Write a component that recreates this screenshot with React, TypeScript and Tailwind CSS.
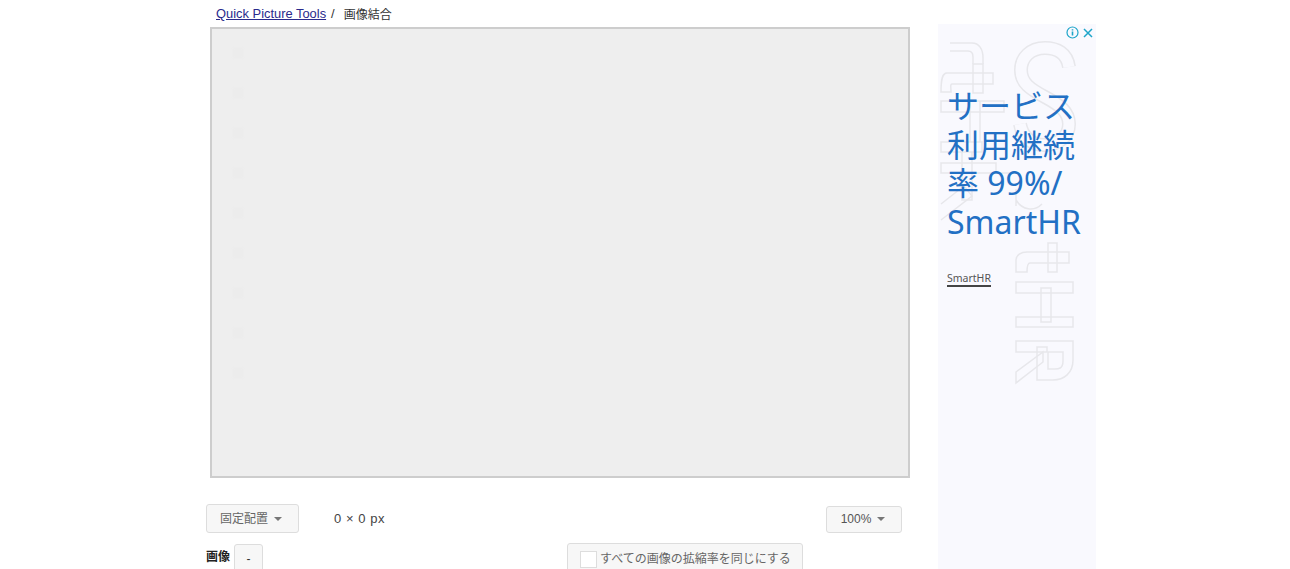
const jp = 'font-["Liberation_Sans","Noto_Sans_CJK_JP",sans-serif]';
const marks = [0, 1, 2, 3, 4, 5, 6, 7, 8];

function Caret() {
  return <span className="ml-[6px] inline-block h-0 w-0 border-x-[4.5px] border-t-[4px] border-x-transparent border-t-[#777]" />;
}

function AdArt() {
  return (
    <svg className="absolute left-0 top-0" width="158" height="545" viewBox="0 0 158 545" fill="none" stroke="#e7e7eb" strokeWidth="1.5">
      {/* S, a thick line with a thinner one on top gives the outline */}
      <path d="M131 43C129 29 119 24 107 24C92 24 83 34 83 46C83 59 92 65 107 73C122 81 131 88 131 100C131 113 120 121 106 121C93 121 84 112 82 100" strokeWidth="14" />
      <path d="M131 43C129 29 119 24 107 24C92 24 83 34 83 46C83 59 92 65 107 73C122 81 131 88 131 100C131 113 120 121 106 121C93 121 84 112 82 100" strokeWidth="11" stroke="#f9f9fe" />
      {/* left glyphs */}
      <path d="M12 19H34C41 19 45 25 45 34V40M12 27H30C33 27 35 29 35 33V40" />
      <path d="M35 40H45V69H35zM9 49H55V60H14C12 60 13 63 13 68H3C3 56 4 49 9 49z" />
      <path d="M3 77H66V88H3zM32 77H42V118H32zM3 118H44V128H3zM3 139H58V149H3zM24 128H34V176H24z" />
      <path d="M3 180L26 162L34 172L3 196M58 149H76M78 176C84 186 96 188 104 180M78 165V182" />
      {/* t */}
      <path d="M110 219H119V248H110z" />
      <path d="M131 228V239H92C90 239 89 241 89 248H78V236C78 231 83 228 89 228z" />
      {/* H */}
      <path d="M78 258H135V269H78zM78 293H135V303H78zM103 264H113V298H103z" />
      {/* R */}
      <path d="M78 317H135V336C135 349 126 356 115 356H99V323H109V328H78z" />
      <path d="M110 328H125V337C125 345 120 345 117 345H110z" />
      <path d="M78 348L105 328V338L78 359z" />
    </svg>
  );
}

export default function App() {
  return (
    <div className={`flex h-[569px] overflow-hidden bg-white pl-[206px] text-[#333] ${jp}`}>
      <div className="w-[704px] shrink-0">
        <div className="flex h-[27px] items-center pl-[10px] pt-[2px] text-[12.9px] leading-none">
          <a href="#" className="text-[#2a2a8c] underline">Quick Picture Tools</a>
          <span className="ml-[5px]">/</span>
          <span className="ml-[9px] text-[12px]">画像結合</span>
        </div>
        <div className="ml-[4px] flex h-[451px] w-[700px] flex-col gap-[30px] border-2 border-[#cdcdcd] bg-[#eeeeee] pl-[21px] pt-[19px]">
          {marks.map((m) => (
            <span key={m} className="h-[10px] w-[10px] bg-[#ececec] blur-[1px]" />
          ))}
        </div>

        <div className="mt-[26px] flex h-[29px] items-center">
          <button className="flex h-[29px] w-[93px] items-center justify-center rounded-[3px] border border-[#ddd] bg-[#f7f7f7] pr-[3px] text-[12px] text-[#666]">
            固定配置<Caret />
          </button>
          <span className="ml-[35px] text-[13px] tracking-[0.55px] text-[#444]">0 × 0 px</span>
          <button className="ml-auto mr-[8px] mt-[1px] flex h-[27px] w-[76px] items-center justify-center rounded-[3px] border border-[#ddd] bg-[#f7f7f7] pr-[2px] text-[12px] text-[#555]">
            100%<Caret />
          </button>
        </div>

        <div className="mt-[10px] flex h-[30px] items-start">
          <span className="mt-[5px] text-[12px] font-bold text-[#222]">画像</span>
          <button className="ml-[4px] mt-[1px] h-[29px] w-[29px] rounded-[3px] border border-[#ddd] bg-[#f7f7f7] text-[12px]">-</button>
          <div className="ml-[304px] flex h-[32px] w-[236px] items-center rounded-[3px] border border-[#ddd] bg-[#f7f7f7] pl-[12px] text-[12px] text-[#666]">
            <span className="mr-[3px] h-[17px] w-[17px] border border-[#ddd] bg-white" />
            すべての画像の拡縮率を同じにする
          </div>
        </div>
      </div>

      <aside className="relative ml-[28px] mt-[24px] h-[545px] w-[158px] shrink-0 overflow-hidden bg-[#f9f9fe]">
        <AdArt />
        <div className="absolute right-[2px] top-[2px] flex items-center gap-[3px]">
          <svg width="13" height="13" viewBox="0 0 13 13" fill="none" stroke="#1ea5c9" strokeWidth="1.2">
            <circle cx="6.5" cy="6.5" r="5.5" />
            <path d="M6.5 5.5v4M6.5 3.2v1.2" strokeWidth="1.6" />
          </svg>
          <svg width="12" height="12" viewBox="0 0 12 12" stroke="#1ea5c9" strokeWidth="1.5">
            <path d="M2 2l8 8M10 2l-8 8" />
          </svg>
        </div>
        <div className="relative pl-[9px] pt-[63px]">
          <p className='whitespace-nowrap text-[32px] leading-[38.6px] text-[#2270c4] font-["Noto_Sans","Noto_Sans_CJK_JP",sans-serif]'>
            サービス<br />利用継続<br />率 99%/<br />SmartHR
          </p>
          <div className='mt-[30px] inline-block border-b-2 border-[#444] pb-0 text-[10.5px] leading-[14px] text-[#555] font-["Noto_Sans",sans-serif]'>SmartHR</div>
        </div>
      </aside>
    </div>
  );
}
